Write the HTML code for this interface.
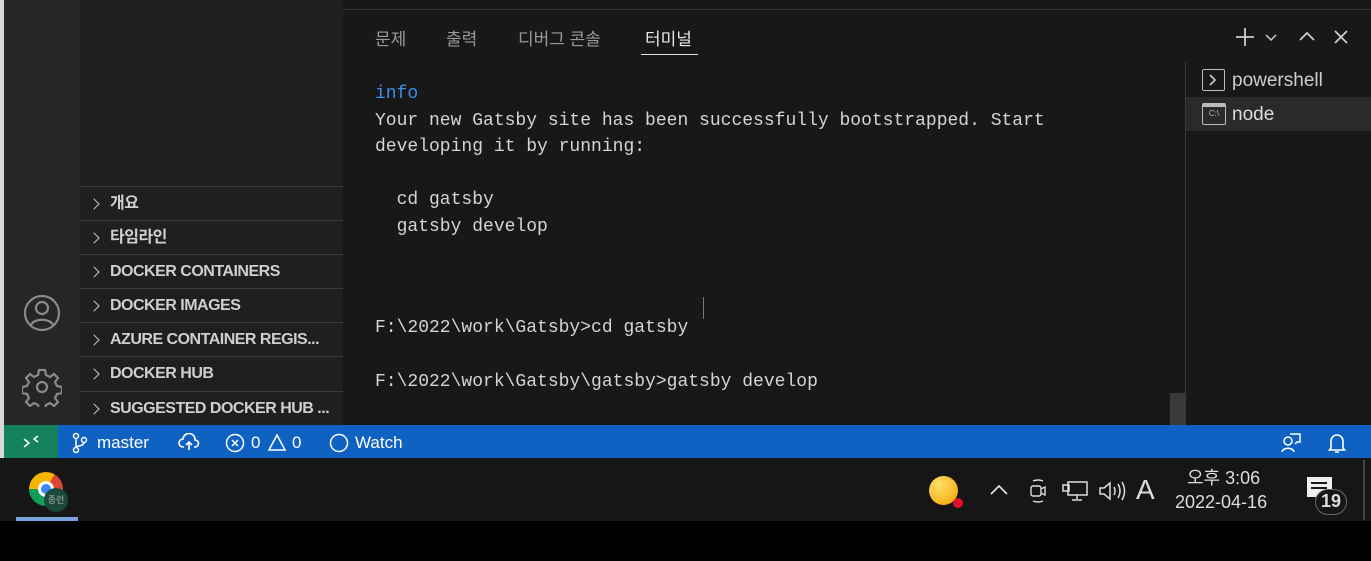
<!DOCTYPE html>
<html><head><meta charset="utf-8"><style>
*{margin:0;padding:0;box-sizing:border-box}
body{width:1371px;height:561px;background:#000;position:relative;overflow:hidden;font-family:"Liberation Sans","Noto Sans CJK KR",sans-serif;color:#ccc}
.abs{position:absolute}
.mono{font-family:"Liberation Mono","Noto Sans CJK KR",monospace;font-size:18px;color:#d4d4d4;white-space:pre}
.row{position:absolute;left:80px;width:263px;height:34px;border-top:1px solid #3a3a3a;font-size:16px;font-weight:bold;color:#cfcfcf;line-height:34px;padding-left:30px;letter-spacing:-0.5px}
.row:before{content:"";position:absolute;left:10px;top:13px;width:7px;height:7px;border-right:1.5px solid #ccc;border-top:1.5px solid #ccc;transform:rotate(45deg)}
.sb{position:absolute;top:426px;height:33px;line-height:33px;color:#fff;font-size:17px}
</style></head><body>
<div class="abs" style="left:0;top:0;width:4px;height:458px;background:#d8d8d8"></div>
<div class="abs" style="left:4px;top:0;width:76px;height:425px;background:#262626"></div>
<div class="abs" style="left:80px;top:0;width:263px;height:425px;background:#1f1f1f"></div>
<div class="abs" style="left:343px;top:0;width:1028px;height:425px;background:#181818"></div>
<div class="abs" style="left:343px;top:9px;width:1028px;height:1px;background:#333"></div>
<svg class="abs" style="left:22px;top:293px" width="40" height="40" viewBox="0 0 40 40" fill="none" stroke="#8a8a8a" stroke-width="2.2"><circle cx="20" cy="20" r="17"/><circle cx="20" cy="15" r="6"/><path d="M9 32c3-7 19-7 22 0"/></svg>
<svg class="abs" style="left:22px;top:367px" width="40" height="40" viewBox="0 0 40 40" fill="none" stroke="#8a8a8a" stroke-width="2.2"><circle cx="20" cy="20" r="5"/><path d="M17 3h6l1 5 4 2 4-3 4 4-3 4 2 4 5 1v6l-5 1-2 4 3 4-4 4-4-3-4 2-1 5h-6l-1-5-4-2-4 3-4-4 3-4-2-4-5-1v-6l5-1 2-4-3-4 4-4 4 3 4-2z"/></svg>
<div class="row" style="top:186px">개요</div>
<div class="row" style="top:220px">타임라인</div>
<div class="row" style="top:254px">DOCKER CONTAINERS</div>
<div class="row" style="top:288px">DOCKER IMAGES</div>
<div class="row" style="top:322px">AZURE CONTAINER REGIS...</div>
<div class="row" style="top:356px">DOCKER HUB</div>
<div class="row" style="top:391px">SUGGESTED DOCKER HUB ...</div>
<div class="abs" style="left:375px;top:25px;font-size:17px;color:#9a9a9a">문제</div>
<div class="abs" style="left:446px;top:25px;font-size:17px;color:#9a9a9a">출력</div>
<div class="abs" style="left:518px;top:25px;font-size:17px;color:#9a9a9a">디버그 콘솔</div>
<div class="abs" style="left:645px;top:25px;font-size:17px;color:#e8e8e8">터미널</div>
<div class="abs" style="left:641px;top:54px;width:57px;height:1px;background:#e0e0e0"></div>
<svg class="abs" style="left:1234px;top:26px" width="22" height="22" viewBox="0 0 22 22" fill="none" stroke="#ccc" stroke-width="1.8"><path d="M11 2v18M2 11h18"/></svg>
<svg class="abs" style="left:1264px;top:32px" width="14" height="10" viewBox="0 0 14 10" fill="none" stroke="#ccc" stroke-width="1.5"><path d="M2 3l5 5 5-5"/></svg>
<svg class="abs" style="left:1297px;top:29px" width="20" height="14" viewBox="0 0 20 14" fill="none" stroke="#ccc" stroke-width="1.8"><path d="M3 11l7-7 7 7"/></svg>
<svg class="abs" style="left:1333px;top:29px" width="16" height="16" viewBox="0 0 16 16" fill="none" stroke="#ccc" stroke-width="1.8"><path d="M2 2l12 12M14 2L2 14"/></svg>
<div class="abs mono" style="left:375px;top:81px;line-height:26.6px"><span style="color:#3b8eea">info</span>
Your new Gatsby site has been successfully bootstrapped. Start
developing it by running:

  cd gatsby
  gatsby develop</div>
<div class="abs mono" style="left:375px;top:318px">F:\2022\work\Gatsby&gt;cd gatsby</div>
<div class="abs mono" style="left:375px;top:372px">F:\2022\work\Gatsby\gatsby&gt;gatsby develop</div>
<div class="abs" style="left:703px;top:297px;width:1px;height:22px;background:#777"></div>
<div class="abs" style="left:1170px;top:393px;width:15px;height:32px;background:#3a3a3a"></div>
<div class="abs" style="left:1185px;top:62px;width:1px;height:363px;background:#3a3a3a"></div>
<div class="abs" style="left:1186px;top:97px;width:185px;height:34px;background:#2a2a2d"></div>
<div class="abs" style="left:1202px;top:69px;width:23px;height:22px;border:1.5px solid #bbb;border-radius:2px"></div>
<svg class="abs" style="left:1206px;top:73px" width="14" height="14" viewBox="0 0 14 14" fill="none" stroke="#ccc" stroke-width="1.6"><path d="M4 2l5 5-5 5"/></svg>
<div class="abs" style="left:1232px;top:70px;font-size:19px;color:#ccc">powershell</div>
<div class="abs" style="left:1202px;top:103px;width:24px;height:22px;border:1.5px solid #bbb;border-top-width:4px;border-radius:2px;font-size:8px;color:#bbb;text-align:center;line-height:14px">C:\</div>
<div class="abs" style="left:1232px;top:104px;font-size:19px;color:#ddd">node</div>
<div class="abs" style="left:4px;top:425px;width:1367px;height:33px;background:#0f62c2"></div>
<div class="abs" style="left:4px;top:425px;width:54px;height:33px;background:#16825d"></div>
<svg class="abs" style="left:22px;top:434px" width="20" height="16" viewBox="0 0 20 16" fill="none" stroke="#fff" stroke-width="1.5"><path d="M2 5l5 4-5 4M16 2l-4 3 4 3"/></svg>
<svg class="abs" style="left:72px;top:432px" width="16" height="22" viewBox="0 0 16 22" fill="none" stroke="#fff" stroke-width="1.5"><circle cx="4" cy="4" r="2.5"/><circle cx="4" cy="18" r="2.5"/><circle cx="12" cy="8" r="2.5"/><path d="M4 6.5v9M12 10.5c0 4-8 3-8 5"/></svg>
<div class="sb" style="left:97px">master</div>
<svg class="abs" style="left:178px;top:433px" width="22" height="20" viewBox="0 0 22 20" fill="none" stroke="#fff" stroke-width="1.6"><path d="M6 14H5a4 4 0 010-8 6 6 0 0112 1 3.5 3.5 0 010 7h-1M11 17V9M8 12l3-3 3 3"/></svg>
<svg class="abs" style="left:225px;top:433px" width="20" height="20" viewBox="0 0 20 20" fill="none" stroke="#fff" stroke-width="1.5"><circle cx="10" cy="10" r="8.5"/><path d="M7 7l6 6M13 7l-6 6"/></svg>
<div class="sb" style="left:251px">0</div>
<svg class="abs" style="left:267px;top:433px" width="20" height="19" viewBox="0 0 20 19" fill="none" stroke="#fff" stroke-width="1.5"><path d="M10 2L18 17H2z"/></svg>
<div class="sb" style="left:292px">0</div>
<svg class="abs" style="left:329px;top:433px" width="20" height="20" viewBox="0 0 20 20" fill="none" stroke="#fff" stroke-width="1.5"><circle cx="10" cy="10" r="8.5"/></svg>
<div class="sb" style="left:355px">Watch</div>
<svg class="abs" style="left:1280px;top:432px" width="22" height="22" viewBox="0 0 22 22" fill="none" stroke="#fff" stroke-width="1.5"><circle cx="8" cy="9" r="4"/><path d="M2 20c1-5 11-5 12 0M10 2h10v8h-3l-2 2"/></svg>
<svg class="abs" style="left:1328px;top:432px" width="18" height="22" viewBox="0 0 18 22" fill="none" stroke="#fff" stroke-width="1.6"><path d="M3 16V9a6 6 0 0112 0v7l1.5 2h-15zM7 20h4"/></svg>
<div class="abs" style="left:0;top:458px;width:1371px;height:63px;background:#161616"></div>
<div class="abs" style="left:1363px;top:460px;width:2px;height:60px;background:#444"></div>
<div class="abs" style="left:16px;top:517px;width:62px;height:4px;background:#7aa3e0"></div>
<div class="abs" style="left:29px;top:472px;width:34px;height:34px;border-radius:50%;background:conic-gradient(from 30deg,#db4437 0 120deg,#0f9d58 120deg 240deg,#f4b400 240deg 360deg)"></div>
<div class="abs" style="left:38px;top:481px;width:16px;height:16px;border-radius:50%;background:#4285f4;border:3px solid #fff"></div>
<div class="abs" style="left:44px;top:488px;width:24px;height:24px;border-radius:50%;background:#1b4a3a;font-size:9px;color:#aaa;text-align:center;line-height:24px">종런</div>
<div class="abs" style="left:929px;top:476px;width:29px;height:29px;border-radius:50%;background:radial-gradient(circle at 35% 30%,#ffe066,#f5a000)"></div>
<div class="abs" style="left:953px;top:498px;width:10px;height:10px;border-radius:50%;background:#e0102a"></div>
<svg class="abs" style="left:988px;top:482px" width="22" height="14" viewBox="0 0 22 14" fill="none" stroke="#ddd" stroke-width="1.8"><path d="M3 12l8-8 8 8"/></svg>
<svg class="abs" style="left:1028px;top:477px" width="20" height="28" viewBox="0 0 20 28" fill="none" stroke="#ddd" stroke-width="1.4"><path d="M5 4q5-2 10 0M5 24q5 2 10 0"/><rect x="3" y="9" width="10" height="10" rx="2"/><path d="M13 12l4-2v8l-4-2"/></svg>
<svg class="abs" style="left:1061px;top:480px" width="28" height="22" viewBox="0 0 28 22" fill="none" stroke="#ddd" stroke-width="1.5"><rect x="7" y="2" width="19" height="13"/><path d="M16 15v4M11 20h10M2 5h6v6H2z"/></svg>
<svg class="abs" style="left:1098px;top:479px" width="28" height="24" viewBox="0 0 28 24" fill="none" stroke="#ddd" stroke-width="1.5"><path d="M2 9h4l6-5v16l-6-5H2zM16 8q2 4 0 8M20 5q4 7 0 14M24 3q5 9 0 18"/></svg>
<div class="abs" style="left:1136px;top:474px;font-size:28px;color:#ddd">A</div>
<div class="abs" style="left:1187px;top:464px;font-size:18px;color:#ddd">오후 3:06</div>
<div class="abs" style="left:1175px;top:492px;font-size:18px;color:#ddd">2022-04-16</div>
<div class="abs" style="left:1307px;top:477px;width:25px;height:20px;background:#eee"></div>
<div class="abs" style="left:1311px;top:482px;width:16px;height:2px;background:#161616"></div>
<div class="abs" style="left:1311px;top:487px;width:16px;height:2px;background:#161616"></div>
<div class="abs" style="left:1315px;top:489px;width:32px;height:26px;border-radius:13px;background:#161616;border:1.5px solid #666;font-size:18px;font-weight:bold;color:#ddd;text-align:center;line-height:23px">19</div>
</body></html>
